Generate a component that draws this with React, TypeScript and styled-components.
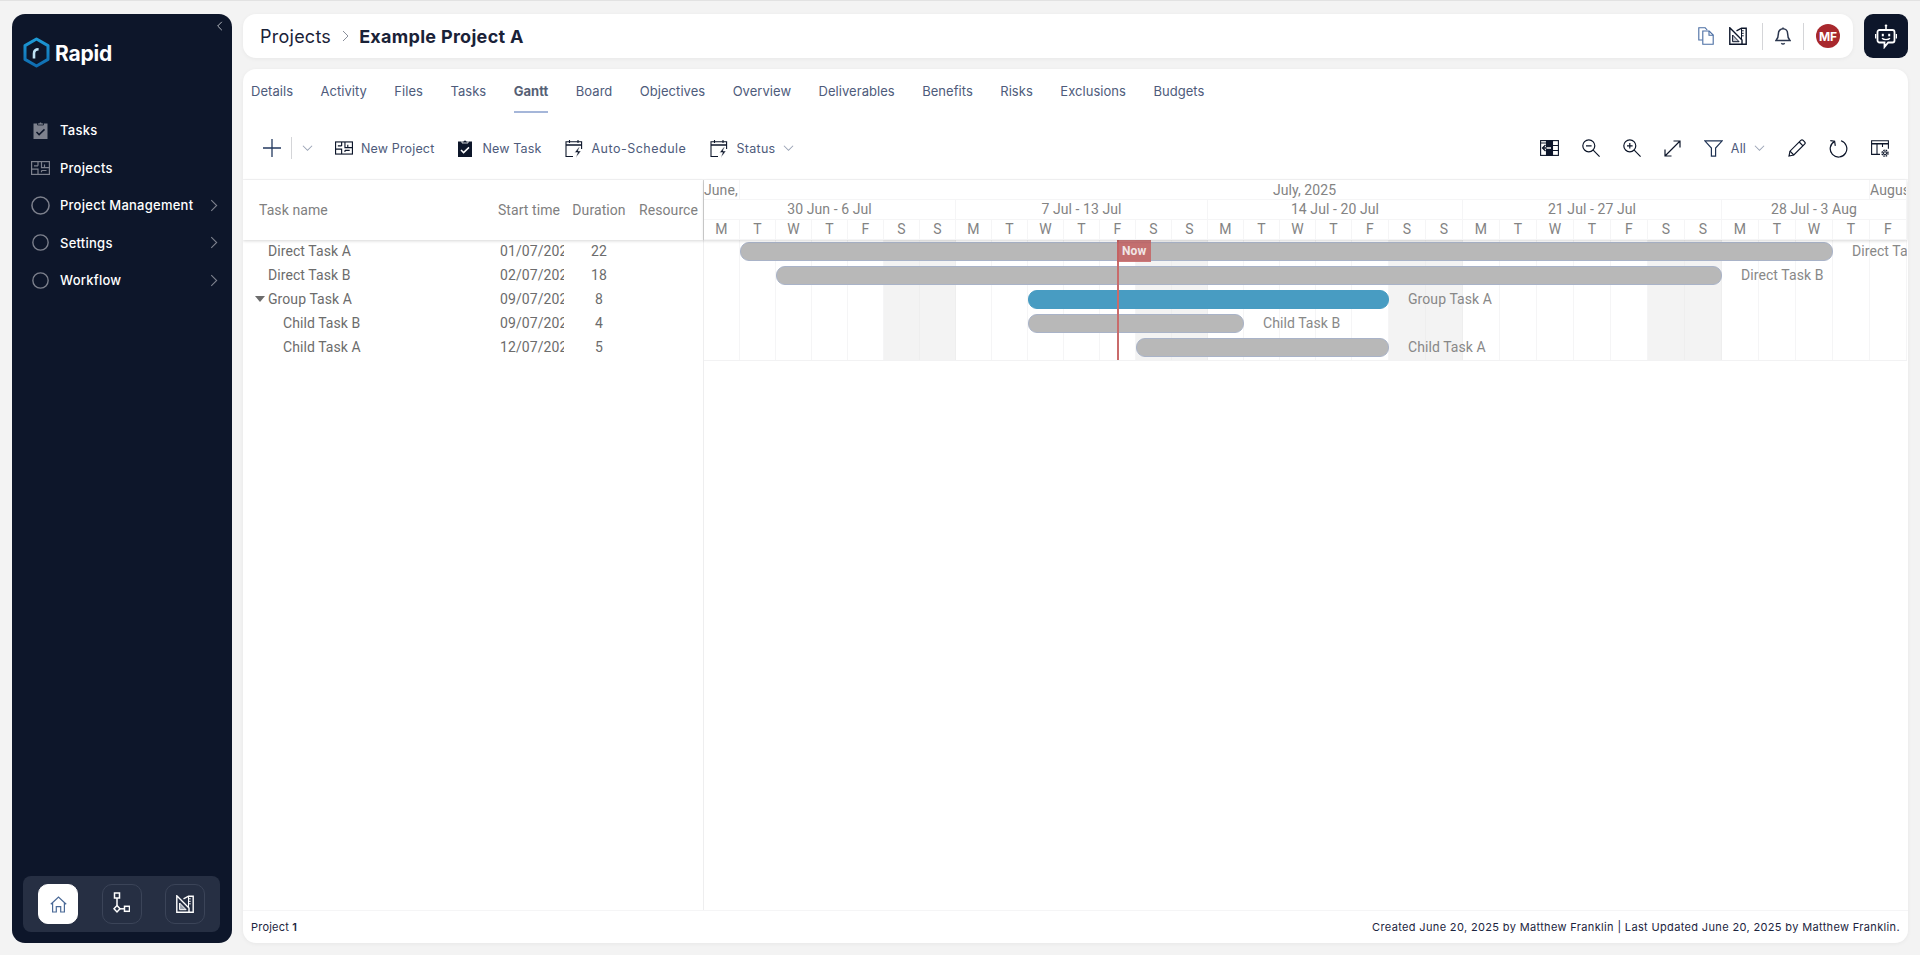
import * as React from "react";
import styled, { createGlobalStyle, css } from "styled-components";

const NAVY = "#0d162a";
const SLATE = "#4e5b7b";
const GREY_ICON = "#7d818d";
const LINE = "#f5f5f6";
const UI_FONT = `"Inter", "Liberation Sans", sans-serif`;
const GRID_FONT = `"Roboto", "Liberation Sans", sans-serif`;

const GlobalStyle = createGlobalStyle`
  html, body { margin: 0; padding: 0; background: #f3f3f3; }
  * { box-sizing: border-box; }
  body { font-family: ${UI_FONT}; overflow: hidden; }
`;

const Page = styled.div`
  height: 955px;
  border-top: 1px solid #e2e2e2;
  padding: 13px 12px 12px;
  display: flex;
  gap: 11px;
`;

/* ---------- sidebar ---------- */

const Sidebar = styled.aside`
  position: relative;
  flex: none;
  width: 220px;
  background: ${NAVY};
  border-radius: 13px;
  display: flex;
  flex-direction: column;
`;

const Collapse = styled.button`
  position: absolute;
  top: 7px;
  right: 6px;
  width: 10px;
  height: 10px;
  padding: 0;
  border: 0;
  background: none;
  display: flex;
`;

const LogoRow = styled.div`
  display: flex;
  align-items: center;
  gap: 5px;
  margin: 23px 0 0 11px;
  height: 31px;
`;

const LogoText = styled.span`
  color: #fff;
  font-size: 21px;
  font-weight: 700;
  letter-spacing: -0.2px;
  padding-top: 2px;
`;

const Nav = styled.nav`
  margin-top: 43.5px;
  display: flex;
  flex-direction: column;
`;

const NavItem = styled.div`
  height: 37.5px;
  padding: 0 11px 0 17px;
  display: flex;
  align-items: center;
  gap: 9px;
  color: #fff;
  font-size: 13px;
  font-weight: 500;
  letter-spacing: 0.25px;
`;

const NavIcon = styled.span`
  flex: none;
  width: 22px;
  display: flex;
  justify-content: center;
`;

const NavArrow = styled.span`
  margin-left: auto;
  display: flex;
`;

const Dock = styled.div`
  margin: auto 12px 11px 11px;
  height: 56px;
  padding: 0 15px;
  background: #262f43;
  border-radius: 8px;
  display: flex;
  align-items: center;
  justify-content: space-between;
`;

const DockButton = styled.button<{ $active?: boolean }>`
  width: 40px;
  height: 40px;
  padding: 0;
  border-radius: 10px;
  border: 1px solid ${(p) => (p.$active ? "#fff" : "#3b4458")};
  background: ${(p) => (p.$active ? "#fff" : "transparent")};
  display: flex;
  align-items: center;
  justify-content: center;
`;

/* ---------- top bar ---------- */

const Column = styled.div`
  flex: 1;
  min-width: 0;
  display: flex;
  flex-direction: column;
  gap: 11px;
`;

const TopRow = styled.div`
  flex: none;
  height: 44px;
  display: flex;
  gap: 11px;
`;

const TopBar = styled.header`
  flex: 1;
  background: #fff;
  border-radius: 13px;
  box-shadow: 0 1px 4px rgba(0, 0, 0, 0.05);
  padding: 0 13px 0 17px;
  display: flex;
  align-items: center;
`;

const Crumb = styled.span`
  font-size: 18px;
  color: #1a2238;
  letter-spacing: 0.25px;
`;

const CrumbCurrent = styled(Crumb)`
  font-weight: 700;
  letter-spacing: 0.3px;
`;

const CrumbSep = styled.span`
  display: flex;
  margin: 0 7px 0 9px;
`;

const TopActions = styled.div`
  margin-left: auto;
  display: flex;
  align-items: center;
  gap: 12px;
`;

const IconPair = styled.div`
  display: flex;
  align-items: center;
  gap: 15px;
  margin-right: 3px;
`;

const VLine = styled.span<{ $height?: number }>`
  flex: none;
  width: 1px;
  height: ${(p) => p.$height ?? 27}px;
  background: #d4d5d8;
`;

const Avatar = styled.span`
  width: 24px;
  height: 24px;
  border-radius: 50%;
  background: #a8282d;
  color: #fff;
  font-size: 12px;
  font-weight: 700;
  display: flex;
  align-items: center;
  justify-content: center;
`;

const BotButton = styled.button`
  flex: none;
  width: 44px;
  height: 44px;
  padding: 0;
  border: 0;
  border-radius: 9px;
  background: ${NAVY};
  display: flex;
  align-items: center;
  justify-content: center;
`;

/* ---------- main card ---------- */

const Card = styled.main`
  flex: 1;
  min-height: 0;
  background: #fff;
  border-radius: 13px;
  box-shadow: 0 1px 4px rgba(0, 0, 0, 0.05);
  display: flex;
  flex-direction: column;
  overflow: hidden;
`;

const Tabs = styled.nav`
  flex: none;
  height: 44px;
  padding-left: 8px;
  display: flex;
  gap: 27.4px;
`;

const Tab = styled.a<{ $active?: boolean }>`
  display: flex;
  align-items: center;
  padding-top: 2px;
  font-size: 13px;
  letter-spacing: 0.05px;
  color: ${(p) => (p.$active ? "#565f75" : SLATE)};
  font-weight: ${(p) => (p.$active ? 700 : 400)};
  border-bottom: 2px solid ${(p) => (p.$active ? "#a5b6d9" : "transparent")};
`;

const Toolbar = styled.div`
  flex: none;
  height: 66px;
  padding: 4px 19px 0 20px;
  display: flex;
  align-items: center;
`;

const ToolGroup = styled.div`
  display: flex;
  align-items: center;
  gap: 24px;
`;

const AddGroup = styled.div`
  display: flex;
  align-items: center;
  gap: 10px;
  margin-right: -2px;
`;

const ToolButton = styled.div<{ $gap?: number; $track?: number }>`
  display: flex;
  align-items: center;
  gap: ${(p) => p.$gap ?? 8}px;
  font-size: 12.5px;
  letter-spacing: ${(p) => p.$track ?? 0.15}px;
  color: ${SLATE};
`;

const RightTools = styled(ToolGroup)`
  margin-left: auto;
  gap: 23px;
`;

/* ---------- gantt ---------- */

const Gantt = styled.section`
  flex: 1;
  min-height: 0;
  border-top: 1px solid ${LINE};
  display: flex;
  font-family: ${GRID_FONT};
  font-size: 14px;
  letter-spacing: 0.08px;
`;

const TablePane = styled.div`
  flex: none;
  width: 461px;
  border-right: 1px solid #eeeeef;
`;

const tableColumns = css`
  display: grid;
  grid-template-columns: 251px 70px 70px 69px;
`;

const TableHead = styled.div`
  ${tableColumns}
  height: 60px;
  padding-bottom: 1px;
  align-items: center;
  color: #808080;
  border-right: 1px solid #d3d3d3;
  margin-right: -1px;
  box-shadow: 0 1px 3px rgba(0, 0, 0, 0.16);
  position: relative;
`;

const HeadCell = styled.div<{ $left?: boolean }>`
  text-align: ${(p) => (p.$left ? "left" : "center")};
  padding-left: ${(p) => (p.$left ? "16px" : "0")};
  white-space: nowrap;
`;

const TableRow = styled.div`
  ${tableColumns}
  height: 24px;
  padding-bottom: 2px;
  align-items: center;
  color: #6c6c6c;
`;

const NameCell = styled.div<{ $indent: number }>`
  padding-left: ${(p) => p.$indent}px;
  display: flex;
  align-items: center;
  gap: 3px;
`;

const Caret = styled.span`
  width: 0;
  height: 0;
  border-left: 5px solid transparent;
  border-right: 5px solid transparent;
  border-top: 6px solid #6c6c6c;
`;

const DateCell = styled.div`
  padding-left: 6px;
  overflow: hidden;
  white-space: nowrap;
`;

const NumberCell = styled.div`
  text-align: center;
`;

const Chart = styled.div`
  flex: none;
  width: 1203px;
`;

const dayColumns = css`
  display: grid;
  grid-template-columns: repeat(18, 36px) repeat(15, 37px);
`;

const ChartHead = styled.div`
  ${dayColumns}
  grid-template-rows: 20px 20px 20px;
  height: 60px;
  color: #838383;
  position: relative;
  z-index: 1;
  background: #fff;
  box-shadow: 0 1px 3px rgba(0, 0, 0, 0.16);
`;

const HeadSpan = styled.div<{ $from: number; $to: number; $align?: string }>`
  grid-column: ${(p) => p.$from + 1} / ${(p) => p.$to + 1};
  border-right: 1px solid ${LINE};
  border-bottom: 1px solid ${LINE};
  text-align: ${(p) => p.$align ?? "center"};
  line-height: 19px;
  overflow: hidden;
  white-space: nowrap;
`;

const MonthSpan = styled(HeadSpan)`
  line-height: 21px;
`;

const ChartBody = styled.div`
  ${dayColumns}
  grid-template-rows: repeat(5, 24px);
  height: 120px;
  position: relative;
  box-shadow: 0 1px 0 #f2f2f3;
  overflow: hidden;
`;

const DayColumn = styled.div<{ $col: number; $weekend: boolean }>`
  grid-column: ${(p) => p.$col + 1};
  grid-row: 1 / -1;
  background: ${(p) => (p.$weekend ? "#f3f3f3" : "transparent")};
  border-right: 1px solid ${(p) => (p.$weekend ? "#eeeeee" : LINE)};
`;

const Bar = styled.div<{ $row: number; $from: number; $to: number; $group?: boolean }>`
  grid-row: ${(p) => p.$row};
  grid-column: ${(p) => p.$from + 1} / ${(p) => p.$to + 1};
  align-self: start;
  margin-top: 2px;
  height: 19px;
  border-radius: 9px;
  background: ${(p) => (p.$group ? "#489cc2" : "#b8b8b8")};
  border: 1px solid ${(p) => (p.$group ? "#489cc2" : "#a9b3c8")};
  position: relative;
`;

const BarLabel = styled.div<{ $row: number; $from: number }>`
  grid-row: ${(p) => p.$row};
  grid-column: ${(p) => p.$from + 1} / -1;
  align-self: center;
  margin: 0 0 2px 19px;
  min-width: 0;
  color: #888888;
  white-space: nowrap;
  overflow: hidden;
  position: relative;
`;

const NowLine = styled.div`
  position: absolute;
  top: 0;
  left: 413px;
  width: 2px;
  height: 120px;
  background: #c96b6b;
`;

const NowTag = styled.div`
  position: absolute;
  top: 0;
  left: 413px;
  width: 34px;
  height: 22px;
  background: rgba(197, 96, 96, 0.84);
  color: #f1e6e6;
  font-size: 12px;
  font-weight: 700;
  padding-left: 5px;
  line-height: 22px;
`;

const Footer = styled.footer`
  flex: none;
  height: 33px;
  border-top: 1px solid ${LINE};
  padding: 0 8px;
  display: flex;
  align-items: center;
  justify-content: space-between;
  font-size: 11px;
  letter-spacing: 0.2px;
  color: #1c2540;
`;

const FooterRight = styled.span`
  letter-spacing: 0.35px;
`;

const Strong = styled.b`
  font-weight: 600;
`;

/* ---------- icons ---------- */

type IconProps = { c?: string };

const Chevron = ({ dir, size, c }: { dir: "left" | "right" | "down"; size: number; c: string }) => {
  const d = dir === "left" ? "M7 1 2 6l5 5" : dir === "right" ? "M3 1l5 5-5 5" : "M1 3l5 5 5-5";
  return (
    <svg width={size} height={size} viewBox="0 0 12 12" fill="none" stroke={c} strokeWidth={12 / size > 1 ? 1.1 : 1}>
      <path d={d} />
    </svg>
  );
};

const LogoMark = () => (
  <svg width="27" height="31" viewBox="0 0 27 31" fill="none">
    <defs>
      <linearGradient id="hex" x1="0" y1="0" x2="0" y2="1">
        <stop offset="0" stopColor="#1d9ad6" />
        <stop offset="1" stopColor="#0f6cb0" />
      </linearGradient>
    </defs>
    <path d="M13.5 2 25 8.6v13.8L13.5 29 2 22.4V8.6z" stroke="url(#hex)" strokeWidth="3" strokeLinejoin="round" />
    <path d="M11 21.5v-5c0-2.6 1.6-4.2 4.6-4.2" stroke="#bfe2f5" strokeWidth="2.6" />
  </svg>
);

const ClipboardIcon = ({ c = NAVY, check = "#fff", w = 14, h = 18 }: { c?: string; check?: string; w?: number; h?: number }) => (
  <svg width={w} height={h} viewBox="0 0 14 18">
    <rect x="0" y="2.5" width="14" height="15.5" fill={c} />
    <path d="M4 4V2h2a1 1 0 0 1 2 0h2v2z" fill={c} stroke={check === "#fff" ? "#fff" : NAVY} strokeWidth="0.8" />
    <path d="M3 11l2.6 2.6L11 8.4" fill="none" stroke={check} strokeWidth="1.5" />
  </svg>
);

const FloorPlan = ({ c = NAVY, w = 18, h = 14 }: IconProps & { w?: number; h?: number }) => (
  <svg width={w} height={h} viewBox="0 0 19 14" fill="none" stroke={c} strokeWidth="1.2">
    <rect x="0.6" y="0.6" width="17.8" height="12.8" />
    <path d="M7 .6v4.2M3 4.8h4M.6 8.2H7v5.2M10.5.6v6h8M10.5 9.5h5M10.5 9.5v1.8M13.5 3.5v3" />
  </svg>
);

const Ring = ({ size }: { size: number }) => (
  <svg width={size} height={size} viewBox="0 0 20 20" fill="none" stroke={GREY_ICON} strokeWidth={1.6}>
    <circle cx="10" cy="10" r="9" />
  </svg>
);

const HomeIcon = () => (
  <svg width="17" height="17" viewBox="0 0 17 17" fill="none" stroke="#4b6a97" strokeWidth="1.2">
    <path d="M.8 8.2 8.5 1l7.7 7.2M2.6 6.8V16h3.7v-5.4h4.4V16h3.7V6.8" />
  </svg>
);

const FlowIcon = () => (
  <svg width="17" height="24" viewBox="0 0 17 24" fill="none" stroke="#fff" strokeWidth="1.5">
    <rect x="1.5" y="1" width="5" height="5" />
    <path d="M4 6v7.5" />
    <path d="M4 13.5 7 16.8 4 20 1 16.8z" />
    <path d="M7 16.8h4.5" />
    <rect x="11.5" y="14.3" width="5" height="5" />
  </svg>
);

const SetSquare = ({ c = NAVY, fill = "#c9cbd1", size = 18 }: IconProps & { fill?: string; size?: number }) => (
  <svg width={size} height={size} viewBox="0 0 18 18" fill="none" stroke={c} strokeWidth="1.4">
    <path d="M.8.8 13 13v4.2H.8z" />
    <path d="M3.6 14.7V8l6.5 6.7z" fill={fill} strokeWidth="1" />
    <path d="M7.5 3.8 12.5 1.2h4.7v16H13" />
    <path d="M12.5 3.8h2.2M12.5 6.3h2.2M12.5 8.8h2.2M12.5 1.2v11" strokeWidth="1" />
  </svg>
);

const CopyIcon = () => (
  <svg width="16" height="18" viewBox="0 0 16 18" fill="none" stroke="#4a6da3" strokeWidth="1.1">
    <path d="M4.5 13H.8V.8h6.4l2 2.2" />
    <path d="M4.8 4h6.4l4 4v9.2H4.8z" />
    <path d="M11 4v4.2h4.2" />
  </svg>
);

const BellIcon = () => (
  <svg width="16" height="18" viewBox="0 0 16 18" fill="none" stroke="#2b364e" strokeWidth="1.5">
    <path d="M8 1.8a4.6 4.6 0 0 1 4.6 4.6c0 4 .9 5.6 2.4 7.2H1c1.5-1.6 2.4-3.2 2.4-7.2A4.6 4.6 0 0 1 8 1.8z" />
    <path d="M8 .4v1.4M6.3 16.2c.9.9 2.5.9 3.4 0" />
  </svg>
);

const BotIcon = () => (
  <svg width="22" height="25" viewBox="0 0 22 25" fill="none" stroke="#fff" strokeWidth="1.6">
    <circle cx="11" cy="1.8" r="1.3" fill="#fff" stroke="none" />
    <path d="M11 3v3" />
    <path d="M4.5 6h13a2 2 0 0 1 2 2v8.5a2 2 0 0 1-2 2h-4.3L9.5 23v-4.5h-5a2 2 0 0 1-2-2V8a2 2 0 0 1 2-2z" strokeWidth="1.8" />
    <rect x="6.8" y="9.8" width="2" height="2.5" fill="#fff" stroke="none" />
    <rect x="13.2" y="9.8" width="2" height="2.5" fill="#fff" stroke="none" />
    <path d="M7 14.2c1.8 1.8 6.2 1.8 8 0" strokeWidth="1.3" />
    <path d="M.6 10v4.5M21.4 10v4.5" strokeWidth="1.3" />
  </svg>
);

const PlusIcon = () => (
  <svg width="18" height="18" viewBox="0 0 18 18" stroke="#23395f" strokeWidth="1.3">
    <path d="M0 9h18M9 0v18" />
  </svg>
);

const CalendarBolt = () => (
  <svg width="18" height="19" viewBox="0 0 18 19" fill="none" stroke={NAVY} strokeWidth="1.1">
    <path d="M8 17.5H1V2.8h15.6V10" />
    <path d="M1 6h15.6" strokeWidth="1.3" />
    <path d="M4.5 1v3M13 1v3" />
    <path d="M14 8 9.6 13.5h3l-1.6 5 5-6.5h-3l1.6-4z" fill={NAVY} stroke="#fff" strokeWidth="0.5" />
  </svg>
);

const ColumnsBack = () => (
  <svg width="19" height="16" viewBox="0 0 19 16" fill="none" stroke={NAVY} strokeWidth="1.1">
    <rect x="0.6" y="0.6" width="17.8" height="14.8" />
    <rect x="6.5" y="0.6" width="6" height="14.8" fill={NAVY} />
    <path d="M12.5 5.5h6M12.5 10.5h6M.6 3h6" />
    <path d="M6.5 8H2.5M5.5 5 2.5 8l3 3" strokeWidth="1.3" />
    <path d="M11 8H6.5" stroke="#fff" strokeWidth="1.3" />
  </svg>
);

const ZoomIcon = ({ plus }: { plus?: boolean }) => (
  <svg width="18" height="18" viewBox="0 0 18 18" fill="none" stroke={NAVY} strokeWidth="1.2">
    <circle cx="6.8" cy="6.8" r="6" />
    <path d="M11.2 11.2 17.6 17.6M4 6.8h5.6" />
    {plus && <path d="M6.8 4v5.6" />}
  </svg>
);

const ExpandIcon = () => (
  <svg width="17" height="17" viewBox="0 0 17 17" fill="none" stroke={NAVY} strokeWidth="1.2">
    <path d="M1 16 16 1M9.5 1H16v6.5M1 9.5V16h6.5" />
  </svg>
);

const FilterIcon = () => (
  <svg width="19" height="17" viewBox="0 0 19 17" fill="none" stroke="#1f3354" strokeWidth="1.2">
    <path d="M.8.8h17.4L11.6 8v8.2H7.4V8z" />
  </svg>
);

const PencilIcon = () => (
  <svg width="18" height="18" viewBox="0 0 18 18" fill="none" stroke={NAVY} strokeWidth="1.2">
    <path d="M1 17l1-4.8L12.8 1.4a1.7 1.7 0 0 1 2.4 0l1.4 1.4a1.7 1.7 0 0 1 0 2.4L5.8 16z" />
    <path d="M2 12.2 5.8 16M11.2 3l3.8 3.8" />
  </svg>
);

const RefreshIcon = () => (
  <svg width="19" height="19" viewBox="0 0 19 19" fill="none" stroke={NAVY} strokeWidth="1.2">
    <path d="M5.6 2.4a8.3 8.3 0 1 0 6.4-.6" />
    <path d="M6.3 6.8 5.6 2.2 1.3 1.6" />
  </svg>
);

const TableGear = () => (
  <svg width="18" height="17" viewBox="0 0 18 17" fill="none" stroke={NAVY} strokeWidth="1.1">
    <path d="M9 14.4H.6V.8h16.8v8" />
    <path d="M.6 3.8h16.8" strokeWidth="1.5" />
    <path d="M6 3.8v10.6M11.5 3.8V7" />
    <circle cx="14" cy="13.2" r="1.5" />
    <circle cx="14" cy="13.2" r="3" strokeDasharray="1.5 0.9" strokeWidth="1.3" />
  </svg>
);

/* ---------- data ---------- */

const NAV = [
  { label: "Tasks", icon: <ClipboardIcon c={GREY_ICON} check={NAVY} w={15} h={18} /> },
  { label: "Projects", icon: <FloorPlan c={GREY_ICON} w={19} h={14} /> },
  { label: "Project Management", icon: <Ring size={19} />, more: true },
  { label: "Settings", icon: <Ring size={17} />, more: true },
  { label: "Workflow", icon: <Ring size={17} />, more: true },
];

const TABS = ["Details", "Activity", "Files", "Tasks", "Gantt", "Board", "Objectives", "Overview", "Deliverables", "Benefits", "Risks", "Exclusions", "Budgets"];

const ROWS = [
  { name: "Direct Task A", start: "01/07/2025", days: 22, indent: 25 },
  { name: "Direct Task B", start: "02/07/2025", days: 18, indent: 25 },
  { name: "Group Task A", start: "09/07/2025", days: 8, indent: 12, group: true },
  { name: "Child Task B", start: "09/07/2025", days: 4, indent: 40 },
  { name: "Child Task A", start: "12/07/2025", days: 5, indent: 40 },
];

const BARS = [
  { name: "Direct Task A", from: 1, to: 31 },
  { name: "Direct Task B", from: 2, to: 28 },
  { name: "Group Task A", from: 9, to: 19, group: true },
  { name: "Child Task B", from: 9, to: 15 },
  { name: "Child Task A", from: 12, to: 19 },
];

const WEEKS = [
  { label: "30 Jun - 6 Jul", from: 0, to: 7 },
  { label: "7 Jul - 13 Jul", from: 7, to: 14 },
  { label: "14 Jul - 20 Jul", from: 14, to: 21 },
  { label: "21 Jul - 27 Jul", from: 21, to: 28 },
  { label: "28 Jul - 3 Aug", from: 28, to: 33 },
];

const LETTERS = ["M", "T", "W", "T", "F", "S", "S"];
const DAYS = Array.from({ length: 33 }, (_, i) => i);

export default function App() {
  return (
    <Page>
      <GlobalStyle />
      <Sidebar>
        <Collapse>
          <Chevron dir="left" size={10} c="#c5c8cf" />
        </Collapse>
        <LogoRow>
          <LogoMark />
          <LogoText>Rapid</LogoText>
        </LogoRow>
        <Nav>
          {NAV.map((n) => (
            <NavItem key={n.label}>
              <NavIcon>{n.icon}</NavIcon>
              {n.label}
              {n.more && (
                <NavArrow>
                  <Chevron dir="right" size={13} c={GREY_ICON} />
                </NavArrow>
              )}
            </NavItem>
          ))}
        </Nav>
        <Dock>
          <DockButton $active>
            <HomeIcon />
          </DockButton>
          <DockButton>
            <FlowIcon />
          </DockButton>
          <DockButton>
            <SetSquare c="#fff" fill="#9aa0ad" />
          </DockButton>
        </Dock>
      </Sidebar>

      <Column>
        <TopRow>
          <TopBar>
            <Crumb>Projects</Crumb>
            <CrumbSep>
              <Chevron dir="right" size={12} c="#8a8f9b" />
            </CrumbSep>
            <CrumbCurrent>Example Project A</CrumbCurrent>
            <TopActions>
              <IconPair>
                <CopyIcon />
                <SetSquare />
              </IconPair>
              <VLine />
              <BellIcon />
              <VLine />
              <Avatar>MF</Avatar>
            </TopActions>
          </TopBar>
          <BotButton>
            <BotIcon />
          </BotButton>
        </TopRow>

        <Card>
          <Tabs>
            {TABS.map((t) => (
              <Tab key={t} $active={t === "Gantt"}>
                {t}
              </Tab>
            ))}
          </Tabs>

          <Toolbar>
            <ToolGroup>
              <AddGroup>
                <PlusIcon />
                <VLine $height={22} />
                <Chevron dir="down" size={11} c="#9aa3b5" />
              </AddGroup>
              <ToolButton>
                <FloorPlan />
                New Project
              </ToolButton>
              <ToolButton $gap={10}>
                <ClipboardIcon />
                New Task
              </ToolButton>
              <ToolButton $track={0.5}>
                <CalendarBolt />
                Auto-Schedule
              </ToolButton>
              <ToolButton $gap={8} $track={0.3}>
                <CalendarBolt />
                Status
                <Chevron dir="down" size={11} c="#9aa3b5" />
              </ToolButton>
            </ToolGroup>
            <RightTools>
              <ColumnsBack />
              <ZoomIcon />
              <ZoomIcon plus />
              <ExpandIcon />
              <ToolButton>
                <FilterIcon />
                All
                <Chevron dir="down" size={11} c="#9aa3b5" />
              </ToolButton>
              <PencilIcon />
              <RefreshIcon />
              <TableGear />
            </RightTools>
          </Toolbar>

          <Gantt>
            <TablePane>
              <TableHead>
                <HeadCell $left>Task name</HeadCell>
                <HeadCell>Start time</HeadCell>
                <HeadCell>Duration</HeadCell>
                <HeadCell>Resource</HeadCell>
              </TableHead>
              {ROWS.map((r) => (
                <TableRow key={r.name}>
                  <NameCell $indent={r.indent}>
                    {r.group && <Caret />}
                    {r.name}
                  </NameCell>
                  <DateCell>{r.start}</DateCell>
                  <NumberCell>{r.days}</NumberCell>
                </TableRow>
              ))}
            </TablePane>

            <Chart>
              <ChartHead>
                <MonthSpan $from={0} $to={1} $align="left">June,</MonthSpan>
                <MonthSpan $from={1} $to={32}>July, 2025</MonthSpan>
                <MonthSpan $from={32} $to={33} $align="left">August</MonthSpan>
                {WEEKS.map((w) => (
                  <HeadSpan key={w.label} $from={w.from} $to={w.to}>
                    {w.label}
                  </HeadSpan>
                ))}
                {DAYS.map((d) => (
                  <HeadSpan key={d} $from={d} $to={d + 1}>
                    {LETTERS[d % 7]}
                  </HeadSpan>
                ))}
              </ChartHead>
              <ChartBody>
                {DAYS.map((d) => (
                  <DayColumn key={d} $col={d} $weekend={d % 7 >= 5} />
                ))}
                {BARS.map((b, i) => (
                  <React.Fragment key={b.name}>
                    <Bar $row={i + 1} $from={b.from} $to={b.to} $group={b.group} />
                    <BarLabel $row={i + 1} $from={b.to}>{b.name}</BarLabel>
                  </React.Fragment>
                ))}
                <NowLine />
                <NowTag>Now</NowTag>
              </ChartBody>
            </Chart>
          </Gantt>

          <Footer>
            <span>
              Project <Strong>1</Strong>
            </span>
            <FooterRight>Created June 20, 2025 by Matthew Franklin | Last Updated June 20, 2025 by Matthew Franklin.</FooterRight>
          </Footer>
        </Card>
      </Column>
    </Page>
  );
}
